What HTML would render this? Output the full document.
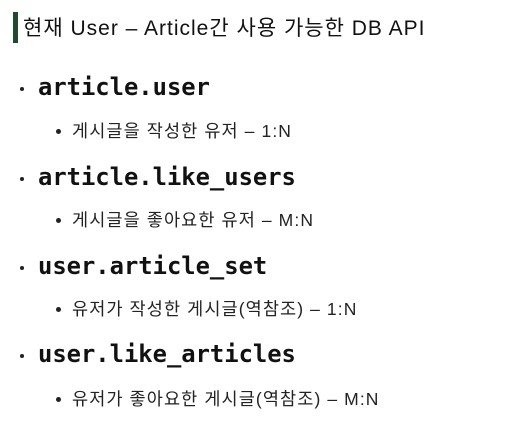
<!DOCTYPE html>
<html><head><meta charset="utf-8"><style>
body{margin:0;width:505px;height:437px;background:#fff;position:relative;overflow:hidden;color:#111}
.bar{position:absolute;left:13px;top:12px;width:5px;height:31px;background:#1f4a30}
.t{position:absolute;left:23px;top:12px;font:21px "Liberation Sans","Noto Sans CJK KR",sans-serif;white-space:nowrap;letter-spacing:1px}
.c{position:absolute;left:38px;font:bold 23.8px "DejaVu Sans Mono","Liberation Mono",monospace;white-space:nowrap;line-height:28px}
.d{position:absolute;left:20px;width:4px;height:4px;border-radius:50%;background:#222}
.s{position:absolute;left:72px;font:17.5px "Liberation Sans","Noto Sans CJK KR",sans-serif;white-space:nowrap;line-height:20px;color:#222;letter-spacing:1.1px}
.sd{position:absolute;left:56px;width:5px;height:5px;border-radius:50%;background:#222}
</style></head><body>
<div class="bar"></div>
<div class="t">현재 User – Article간 사용 가능한 DB API</div>

<div class="d" style="top:87px"></div><div class="c" style="top:73px">article.user</div>
<div class="sd" style="top:129px"></div><div class="s" style="top:121px">게시글을 작성한 유저 – 1:N</div>

<div class="d" style="top:177px"></div><div class="c" style="top:163px">article.like_users</div>
<div class="sd" style="top:218px"></div><div class="s" style="top:210px">게시글을 좋아요한 유저 – M:N</div>

<div class="d" style="top:266px"></div><div class="c" style="top:252px">user.article_set</div>
<div class="sd" style="top:307px"></div><div class="s" style="top:299px">유저가 작성한 게시글(역참조) – 1:N</div>

<div class="d" style="top:354px"></div><div class="c" style="top:340px">user.like_articles</div>
<div class="sd" style="top:397px"></div><div class="s" style="top:389px">유저가 좋아요한 게시글(역참조) – M:N</div>
</body></html>
